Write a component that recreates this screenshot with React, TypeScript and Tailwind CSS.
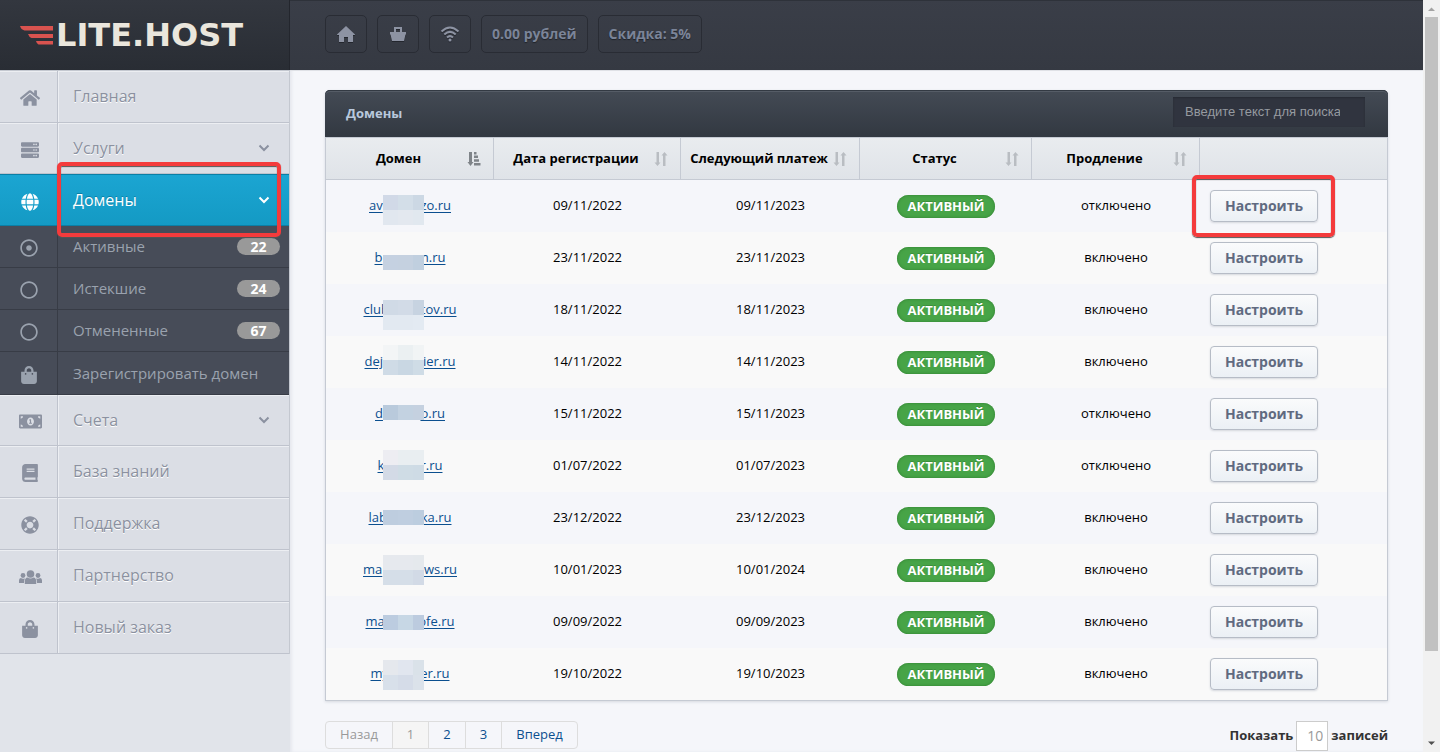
import type { ComponentType, ReactNode } from "react";
import {
  FaBook,
  FaGlobe,
  FaHome,
  FaLifeRing,
  FaMoneyBillAlt,
  FaRegCircle,
  FaRegDotCircle,
  FaServer,
  FaShoppingBag,
} from "react-icons/fa";

type Icon = ComponentType<{ className?: string }>;

function Chevron() {
  return (
    <svg viewBox="0 0 12 8" className="h-2 w-3" fill="none" stroke="currentColor" strokeWidth="2" aria-hidden="true">
      <path d="M1.5 1.5 6 6l4.500-4.500" />
    </svg>
  );
}

function PeopleIcon({ className }: { className?: string }) {
  return (
    <svg viewBox="0 0 23 14" className={className} fill="currentColor" aria-hidden="true">
      <circle cx="11.500" cy="4" r="3.800" />
      <circle cx="4" cy="5.500" r="2.400" />
      <circle cx="19" cy="5.500" r="2.400" />
      <path d="M5.800 14V11.500Q5.800 7.800 8.500 7.500Q11.500 9.600 14.500 7.500Q17.200 7.800 17.200 11.500V14Z" />
      <path d="M0 13V10.500Q0 8.300 1.800 8.100Q4 9.400 6 8.200Q5 9.600 5 13ZM23 13V10.500Q23 8.300 21.200 8.100Q19 9.400 17 8.200Q18 9.600 18 13Z" />
    </svg>
  );
}

function Logo() {
  return (
    <a href="#" aria-label="Elite.Host" className="flex h-[70px] items-center border-r border-[#23262d] bg-linear-to-b from-[#33373f] to-[#292d34] pl-5">
      <svg viewBox="0 0 33 19" className="h-[19px] w-[33px] shrink-0" fill="#d9534f" aria-hidden="true">
        <path d="M0 0h33v4.500H4.500Q1 3.500 0 0ZM8 8h25v4H11.500Q9 11 8 8ZM16 15h17v3.500H18.500Q16.500 17.500 16 15Z" />
      </svg>
      <span className="ml-[3px] font-['DejaVu_Sans',sans-serif] text-[32px] leading-8 font-bold text-[#eae6dc]">LITE.HOST</span>
    </a>
  );
}

function MenuItem({ icon: I, label, expandable, active, height = "h-[52px]", iconClass = "size-[18px]" }: {
  icon: Icon; label: string; expandable?: boolean; active?: boolean; height?: string; iconClass?: string;
}) {
  const look = active
    ? "border-y border-[#0b7fa6] bg-linear-to-b from-[#1ba5d2] to-[#149ac4] text-white [text-shadow:0_-1px_0_#0b7fa6]"
    : "border-b border-[#bfc3cd] bg-[#dbdee5] pb-px text-[#8b91a0] [text-shadow:0_1px_0_#fff] shadow-[inset_0_1px_0_#eceef2]";
  return (
    <a href="#" className={`flex ${height} ${look}`}>
      <span className={`-mb-px flex w-[58px] shrink-0 items-center justify-center border-r pt-[3px] pl-[3px] ${active ? "border-transparent" : "border-[#bfc3cd] shadow-[1px_0_0_#eceef2]"}`}>
        <I className={iconClass} />
      </span>
      <span className="flex flex-1 items-center justify-between pr-[19px] pl-[15px] text-base">
        {label}
        {expandable && <Chevron />}
      </span>
    </a>
  );
}

function SubItem({ icon: I, label, count, height = "h-[42px]" }: { icon: Icon; label: string; count?: number; height?: string }) {
  return (
    <a href="#" className={`flex ${height} border-b border-[#383c46] bg-[#474c58] text-[#9aa2ae]`}>
      <span className="flex w-[58px] shrink-0 items-center justify-center border-r border-[#383c46] pt-[3px] pl-px">
        <I className="size-[18px]" />
      </span>
      <span className="flex flex-1 items-center justify-between pr-[9px] pl-[15px] text-[15px]">
        {label}
        {count !== undefined && (
          <span className="h-[17px] w-[43px] rounded-full bg-[#999] text-center text-sm leading-[17px] font-bold text-white">{count}</span>
        )}
      </span>
    </a>
  );
}

function Frame({ className }: { className: string }) {
  return (
    <span aria-hidden="true" className={`pointer-events-none absolute z-10 rounded-[5px] border-4 border-[#f43b3c] shadow-[0_1px_1px_#555,inset_0_1px_1px_#555] ${className}`} />
  );
}

function Sidebar() {
  return (
    <aside className="w-[290px] shrink-0 bg-[#e1e4ea]">
      <Logo />
      <nav className="border-t border-r border-[#c4c8d0]">
        <MenuItem icon={FaHome} label="Главная" iconClass="size-5" />
        <MenuItem icon={FaServer} label="Услуги" expandable height="h-[51px]" />
        <div className="relative">
          <MenuItem icon={FaGlobe} label="Домены" expandable active />
          <Frame className="-top-3 right-[8px] -bottom-[11px] left-[57px]" />
        </div>
        <SubItem icon={FaRegDotCircle} label="Активные" count={22} />
        <SubItem icon={FaRegCircle} label="Истекшие" count={24} />
        <SubItem icon={FaRegCircle} label="Отмененные" count={67} />
        <SubItem icon={FaShoppingBag} label="Зарегистрировать домен" height="h-[43px]" />
        <MenuItem icon={FaMoneyBillAlt} label="Счета" expandable height="h-[51px]" iconClass="h-[19px] w-[23px]" />
        <MenuItem icon={FaBook} label="База знаний" />
        <MenuItem icon={FaLifeRing} label="Поддержка" />
        <MenuItem icon={PeopleIcon} label="Партнерство" iconClass="h-[14px] w-[23px]" />
        <MenuItem icon={FaShoppingBag} label="Новый заказ" />
      </nav>
    </aside>
  );
}

function TopButton({ children, label }: { children: ReactNode; label?: string }) {
  return (
    <button type="button" aria-label={label} className="flex h-[38px] items-center rounded-[5px] border border-[#292c34] px-[10px] text-sm font-bold text-[#7b8498] [text-shadow:0_1px_1px_#1f2229]">
      {children}
    </button>
  );
}

function TopBar() {
  return (
    <header className="flex h-[70px] gap-[10px] bg-linear-to-b from-[#3a3e48] to-[#353942] px-[35px] pt-[15px] shadow-[inset_0_1px_0_#2e323a,0_1px_0_#dfe1e6]">
      <TopButton label="Главная">
        <svg viewBox="0 0 20 20" className="size-5 drop-shadow-[0_1px_0_#23262d]" fill="#8d93a3" aria-hidden="true">
          <path d="M10 2 19 10.500V11h-2v7h-5v-5H8v5H3v-7H1V10.500Z" />
        </svg>
      </TopButton>
      <TopButton label="Корзина">
        <svg viewBox="0 0 20 20" className="size-5 drop-shadow-[0_1px_0_#23262d]" fill="#8d93a3" aria-hidden="true">
          <path d="M6 3h8v5h4v2.500h-.5L16 17H4L2.500 10.500H2V8h4ZM8 5v3h4V5Z" fillRule="evenodd" />
        </svg>
      </TopButton>
      <TopButton label="Сеть">
        <svg viewBox="0 0 20 20" className="size-5 drop-shadow-[0_1px_0_#23262d]" fill="none" stroke="#8d93a3" strokeWidth="2" aria-hidden="true">
          <path d="M1.500 7.500Q10-.5 18.500 7.500M4.300 10.500Q10 5.300 15.700 10.500M7 13.500Q10 10.800 13 13.500" />
          <circle cx="10" cy="16" r="1.500" fill="#8d93a3" stroke="none" />
        </svg>
      </TopButton>
      <TopButton>0.00 рублей</TopButton>
      <TopButton>Скидка: 5%</TopButton>
    </header>
  );
}

function SortIcon({ sorted }: { sorted?: boolean }) {
  return sorted ? (
    <svg viewBox="0 0 14 14" className="size-[14px] shrink-0" fill="#7f8489" aria-hidden="true">
      <path d="M2 0h3v10h1.500L3.500 14 .5 10H2ZM7 0h2.500v2.500H7ZM7 3.500h4V6H7ZM7 7.200h5v2.500H7ZM7 11h6.500v2.500H7Z" />
    </svg>
  ) : (
    <svg viewBox="0 0 14 14" className="size-[14px] shrink-0" fill="#b9bdc2" aria-hidden="true">
      <path d="M2.500 0H5v10.500h1.500l-3 3.500-3-3.500h2ZM9 14V3.500H7.500l3-3.500 3 3.500h-2V14Z" />
    </svg>
  );
}

const columns = [
  { title: "Домен", width: "w-[168px]" },
  { title: "Дата регистрации", width: "w-[187px]" },
  { title: "Следующий платеж", width: "w-[179px]" },
  { title: "Статус", width: "w-[172px]" },
  { title: "Продление", width: "w-[168px]" },
];

type Row = { start: string; end: string; width: string; top: string; cells: string[]; from: string; to: string; renew: boolean };

const rows: Row[] = [
  { start: "av", end: "zo.ru", width: "w-[82px]", top: "top-[15px]", cells: ["bg-[#d1d9e7]", "bg-[#d3dee8]", "bg-[#ccd8e4]", "bg-[#e1e7ef]", "bg-[#e3e8ef]", "bg-[#e1e8ef]"], from: "09/11/2022", to: "09/11/2023", renew: false },
  { start: "b", end: "m.ru", width: "w-[71px]", top: "top-[23px]", cells: ["bg-[#c5d1e1]", "bg-[#c5d1e0]", "bg-[#c0cfdf]"], from: "23/11/2022", to: "23/11/2023", renew: true },
  { start: "club", end: "tov.ru", width: "w-[93px]", top: "top-[16px]", cells: ["bg-[#d0dae6]", "bg-[#d2dbe7]", "bg-[#c7d3e1]", "bg-[#e2e9f1]", "bg-[#e2e9f1]", "bg-[#e3eaf2]"], from: "18/11/2022", to: "18/11/2023", renew: true },
  { start: "dej", end: "lier.ru", width: "w-[91px]", top: "top-[9px]", cells: ["bg-[#f3f5f6]", "bg-[#ebf0f2]", "bg-[#f1f4f5]", "bg-[#cfdbe6]", "bg-[#c9d7e3]", "bg-[#cfdce6]"], from: "14/11/2022", to: "14/11/2023", renew: true },
  { start: "d", end: "o.ru", width: "w-[70px]", top: "top-[17px]", cells: ["bg-[#b9cadc]", "bg-[#c3d2e1]", "bg-[#c5d1e0]"], from: "15/11/2022", to: "15/11/2023", renew: false },
  { start: "k", end: "r.ru", width: "w-[65px]", top: "top-[10px]", cells: ["bg-[#ededf2]", "bg-[#e9eef1]", "bg-[#e9eef1]", "bg-[#d3dae6]", "bg-[#cfdce5]", "bg-[#cedbe5]"], from: "01/07/2022", to: "01/07/2023", renew: false },
  { start: "lab", end: "ka.ru", width: "w-[83px]", top: "top-[18px]", cells: ["bg-[#becddf]", "bg-[#bfcee0]", "bg-[#bccddf]"], from: "23/12/2022", to: "23/12/2023", renew: true },
  { start: "ma", end: "ws.ru", width: "w-[94px]", top: "top-[11px]", cells: ["bg-[#e6e9ee]", "bg-[#e6e9ee]", "bg-[#e5e9ed]", "bg-[#d5dee8]", "bg-[#d5dee8]", "bg-[#d2dae6]"], from: "10/01/2023", to: "10/01/2024", renew: true },
  { start: "ma", end: "ofe.ru", width: "w-[89px]", top: "top-[19px]", cells: ["bg-[#bccce0]", "bg-[#c7d7e5]", "bg-[#bccbdf]"], from: "09/09/2022", to: "09/09/2023", renew: true },
  { start: "my", end: "er.ru", width: "w-[79px]", top: "top-[12px]", cells: ["bg-[#e5e8ed]", "bg-[#e1e6ef]", "bg-[#dae2e9]", "bg-[#d8e0ea]", "bg-[#d5dce8]", "bg-[#dbe2ea]"], from: "19/10/2022", to: "19/10/2023", renew: true },
];

function DomainRow({ row, framed }: { row: Row; framed?: boolean }) {
  return (
    <tr className="h-[52px] odd:bg-[#f5f6fa] even:bg-[#f9f9f9]">
      <td className="relative p-0">
        <a href="#" className={`inline-flex justify-between text-[#0b4f8f] underline underline-offset-2 ${row.width}`}>
          <span>{row.start}</span>
          <span>{row.end}</span>
        </a>
        <span className={`absolute left-[57px] grid auto-rows-[15px] grid-cols-[15px_15px_11px] ${row.top}`}>
          {row.cells.map((c, i) => (
            <span key={i} className={c} />
          ))}
        </span>
      </td>
      <td className="p-0">{row.from}</td>
      <td className="p-0">{row.to}</td>
      <td className="p-0">
        <span className="inline-block h-[23px] rounded-full bg-[#47a447] px-[10px] leading-[23px] font-bold text-white uppercase shadow-[inset_0_0_3px_#2f7d2f] [text-shadow:0_-1px_0_#3b8f3b]">Активный</span>
      </td>
      <td className="p-0">{row.renew ? "включено" : "отключено"}</td>
      <td className="relative py-0 pr-0 pl-[10px] text-left">
        <button type="button" className="h-8 w-[108px] rounded-[4px] border border-[#b6bcc6] bg-linear-to-b from-[#fafbfc] to-[#ebf0f5] align-middle text-sm font-bold text-[#606a80] shadow-[0_1px_2px_#d5d8de]">Настроить</button>
        {framed && <Frame className="-top-[5px] -bottom-[5px] -left-2 w-[143px]" />}
      </td>
    </tr>
  );
}

function DomainsPanel() {
  return (
    <section className="rounded-t-[5px] shadow-[0_1px_3px_#d5d8df]">
      <div className="flex h-[47px] items-center justify-between rounded-t-[5px] bg-linear-to-b from-[#444b55] to-[#323841] pr-[23px] pl-[21px] shadow-[inset_0_1px_0_#333a43,inset_0_2px_0_#555c66]">
        <h1 className="text-[13px] font-bold text-[#b9c8dc]">Домены</h1>
        <input
          type="search"
          aria-label="Поиск"
          placeholder="Введите текст для поиска"
          className="mb-[3px] h-[30px] w-48 bg-[#30343f] px-3 pb-[2px] font-['Liberation_Sans',sans-serif] text-[13px] text-white shadow-[inset_0_1px_2px_#262a33] placeholder:text-[#969aa0]"
        />
      </div>
      <div className="border border-[#c5cad3]">
        <table className="w-full table-fixed border-separate border-spacing-0 text-center text-[13px] text-black">
          <thead>
            <tr className="bg-linear-to-b from-[#e9ecef] to-[#dfe3e8]">
              {columns.map((c, i) => (
                <th key={c.title} className={`h-[42px] border-r border-b border-[#c5cad3] p-0 ${c.width}`}>
                  <button type="button" className="flex w-full items-center gap-1 pr-3 pl-2 font-bold whitespace-nowrap">
                    <span className="flex-1 text-center">{c.title}</span>
                    <SortIcon sorted={i === 0} />
                  </button>
                </th>
              ))}
              <th aria-label="Действия" className="border-b border-[#c5cad3] p-0" />
            </tr>
          </thead>
          <tbody>
            {rows.map((r, i) => (
              <DomainRow key={i} row={r} framed={i === 0} />
            ))}
          </tbody>
        </table>
      </div>
    </section>
  );
}

function TableFooter() {
  const link = "flex items-center justify-center border-r border-[#ddd] last:border-r-0";
  return (
    <div className="mt-5 flex items-start justify-between text-[13px]">
      <nav aria-label="Страницы" className="flex h-7 overflow-hidden rounded-[4px] border border-[#ddd] text-[#0b4f8f]">
        <a href="#" className={`${link} w-[67px] text-[#999]`}>Назад</a>
        <a href="#" className={`${link} w-9 bg-[#f5f5f5] text-[#999]`}>1</a>
        <a href="#" className={`${link} w-[37px]`}>2</a>
        <a href="#" className={`${link} w-9`}>3</a>
        <a href="#" className={`${link} w-[75px]`}>Вперед</a>
      </nav>
      <label className="flex items-center gap-[3px] font-bold text-[#333]">
        Показать
        <input defaultValue="10" className="h-[30px] w-8 border border-[#ccc] bg-white pr-1 pb-px text-right text-sm font-normal text-[#999]" />
        записей
      </label>
    </div>
  );
}

function ScrollRail() {
  return (
    <div aria-hidden="true" className="sticky top-0 flex h-screen w-[17px] shrink-0 flex-col bg-[#f1f1f1]">
      <svg viewBox="0 0 17 17" className="size-[17px] shrink-0" fill="#a3a3a3">
        <path d="M5 11 8.500 7.500 12 11Z" />
      </svg>
      <div className="mx-[2px] grow-[15] bg-[#c1c1c1]" />
      <div className="grow-2" />
      <svg viewBox="0 0 17 17" className="size-[17px] shrink-0" fill="#505050">
        <path d="M5 6.500 8.500 10 12 6.500Z" />
      </svg>
    </div>
  );
}

export default function App() {
  return (
    <div className="flex min-h-screen bg-[#f5f6fa] font-['Open_Sans',sans-serif]">
      <Sidebar />
      <div className="min-w-0 flex-1 shadow-[inset_2px_0_3px_#e6e8ee]">
        <TopBar />
        <main className="px-[35px] pt-5">
          <DomainsPanel />
          <TableFooter />
        </main>
      </div>
      <ScrollRail />
    </div>
  );
}
